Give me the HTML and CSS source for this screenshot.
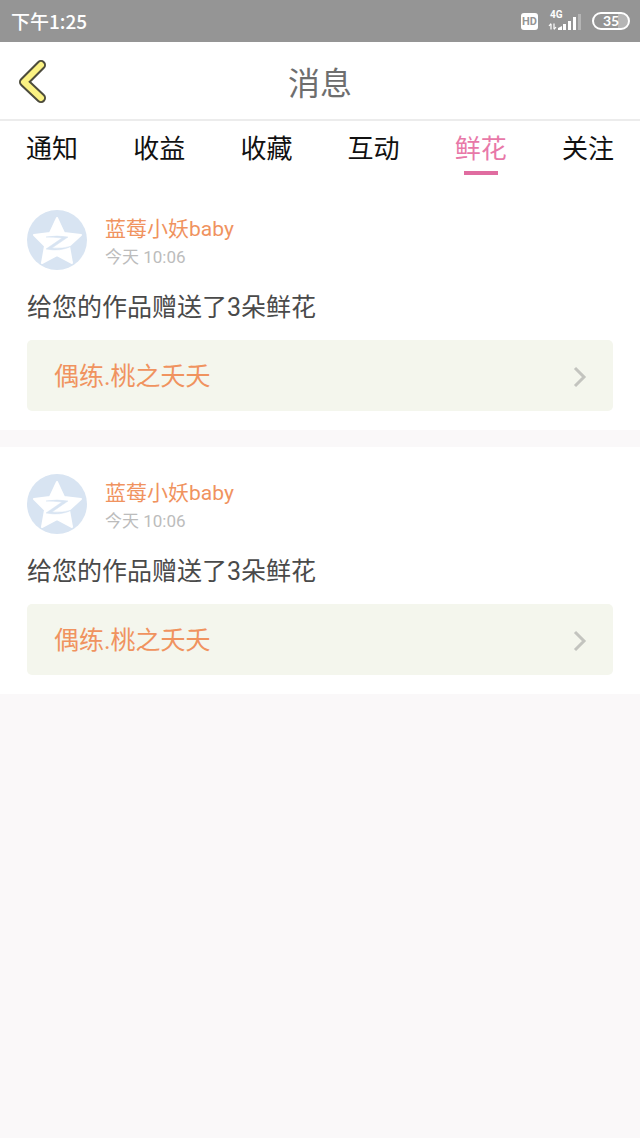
FILE: index.html
```html
<!DOCTYPE html>
<html lang="zh-CN">
<head>
<meta charset="utf-8">
<meta name="viewport" content="width=device-width, initial-scale=1">
<title>消息</title>
<link rel="stylesheet" href="styles.css">
</head>
<body>
<div class="status">
  <span class="status-time">下午1:25</span>
  <div class="status-icons">
    <span class="hd">HD</span>
    <div class="signal">
      <span class="signal-label">4G</span>
      <svg width="34" height="17" viewBox="0 0 34 17" aria-hidden="true">
        <g fill="none" stroke="#fff" stroke-width="1.2"><path d="M3 15.500V10M1 12l2-2.500M6 9.500V15M8 13l-2 2.500"/></g>
        <g fill="#fff"><path d="M10 16v-2l4-2v4zM15 10h3v6h-3zM20 7h3v9h-3zM25 3h3v13h-3z"/><path d="M30 0h3v16h-3z" opacity=".3"/></g>
      </svg>
    </div>
    <span class="battery">35</span>
  </div>
</div>
<header class="header">
  <button class="back" type="button" aria-label="返回">
    <svg width="30" height="46" viewBox="0 0 30 46" aria-hidden="true">
      <g fill="none" stroke-linecap="round" stroke-linejoin="round"><path d="M23 7L6 24L23 40" stroke="#4d4c3c" stroke-width="10"/><path d="M23 7L6 24L23 40" stroke="#fbf283" stroke-width="6"/></g>
    </svg>
  </button>
  <h1 class="title">消息</h1>
</header>
<nav class="tabs">
  <a class="tab" href="#notice">通知</a>
  <a class="tab" href="#income">收益</a>
  <a class="tab" href="#favorites">收藏</a>
  <a class="tab" href="#interact">互动</a>
  <a class="tab tab-active" href="#flowers" aria-current="page">鲜花</a>
  <a class="tab" href="#follow">关注</a>
</nav>
<main class="feed">
  <article class="card">
    <div class="user">
      <svg class="avatar" viewBox="0 0 60 60" aria-hidden="true">
        <circle cx="30" cy="30" r="30" fill="#d8e4f2"/>
        <path d="M30 8L37 23L54 25L42 36L45 53L30 45L15 53L18 36L7 25L23 23Z" fill="#fff" stroke="#fff" stroke-width="2" stroke-linejoin="round"/>
        <path d="M19 27Q30 25 41 27L25 38Q36 39 45 36Q33 42 19 39L35 28Q26 27 19 27Z" fill="#d8e4f2" stroke="#d8e4f2" stroke-width=".5"/>
      </svg>
      <div class="meta">
        <a class="name" href="#user">蓝莓小妖baby</a>
        <time class="time">今天 10:06</time>
      </div>
    </div>
    <p class="message">给您的作品赠送了3朵鲜花</p>
    <a class="work" href="#work">
      <span>偶练.桃之夭夭</span>
      <svg width="14" height="22" viewBox="0 0 14 22" aria-hidden="true"><path d="M2 2L11 11L2 20" fill="none" stroke="#c3c4bf" stroke-width="3"/></svg>
    </a>
  </article>
  <article class="card">
    <div class="user">
      <svg class="avatar" viewBox="0 0 60 60" aria-hidden="true">
        <circle cx="30" cy="30" r="30" fill="#d8e4f2"/>
        <path d="M30 8L37 23L54 25L42 36L45 53L30 45L15 53L18 36L7 25L23 23Z" fill="#fff" stroke="#fff" stroke-width="2" stroke-linejoin="round"/>
        <path d="M19 27Q30 25 41 27L25 38Q36 39 45 36Q33 42 19 39L35 28Q26 27 19 27Z" fill="#d8e4f2" stroke="#d8e4f2" stroke-width=".5"/>
      </svg>
      <div class="meta">
        <a class="name" href="#user">蓝莓小妖baby</a>
        <time class="time">今天 10:06</time>
      </div>
    </div>
    <p class="message">给您的作品赠送了3朵鲜花</p>
    <a class="work" href="#work">
      <span>偶练.桃之夭夭</span>
      <svg width="14" height="22" viewBox="0 0 14 22" aria-hidden="true"><path d="M2 2L11 11L2 20" fill="none" stroke="#c3c4bf" stroke-width="3"/></svg>
    </a>
  </article>
</main>
</body>
</html>
```
FILE: styles.css
```css
* { box-sizing: border-box; }
body {
  margin: 0;
  background: #faf8f9;
  color: #4a4a4a;
  font-family: Roboto, "Noto Sans CJK SC", sans-serif;
}
a { color: inherit; text-decoration: none; }
svg { display: block; flex: none; }

.status {
  display: flex;
  align-items: center;
  justify-content: space-between;
  height: 42px;
  padding: 0 10px 0 11px;
  background: #959595;
  color: #fff;
}
.status-time { font: 500 19px/24px "Noto Sans CJK SC", sans-serif; }
.status-icons { display: flex; align-items: center; gap: 10px; }
.hd {
  width: 17px;
  border-radius: 3px;
  background: #fff;
  color: #959595;
  font-size: 11px;
  font-weight: 700;
  line-height: 17px;
  text-align: center;
}
.signal { position: relative; padding-top: 2px; }
.signal-label {
  position: absolute;
  top: -3px;
  left: 2px;
  font-size: 10px;
  font-weight: 700;
  line-height: 12px;
}
.battery {
  width: 38px;
  border: 2px solid #fff;
  border-radius: 9px;
  background: linear-gradient(to right, transparent 70%, #b5b5b5 70%);
  font: 700 14px/14px Lato, sans-serif;
  text-align: center;
}

.header {
  display: grid;
  grid-template-columns: 64px 1fr 64px;
  align-items: center;
  height: 79px;
  border-bottom: 2px solid #ececec;
  background: #fff;
}
.back { padding: 0 0 0 18px; border: 0; background: none; }
.title {
  margin: 0;
  padding-top: 6px;
  color: #6e6e6e;
  font-size: 32px;
  font-weight: 400;
  line-height: 40px;
  text-align: center;
}

.tabs {
  display: flex;
  justify-content: space-between;
  height: 62px;
  padding: 9px 26px 0;
  background: #fff;
  color: #111;
  font-size: 26px;
  line-height: 38px;
}
.tab { display: flex; flex-direction: column; align-items: center; }
.tab-active { color: #e878a8; }
.tab-active::after {
  width: 34px;
  height: 4px;
  margin-top: 3px;
  background: #e06ca0;
  content: "";
}

.feed { display: grid; gap: 17px; }
.card { padding: 27px 27px 19px; background: #fff; }
.user { display: flex; align-items: center; gap: 18px; }
.avatar { width: 60px; height: 60px; }
.meta { display: flex; flex-direction: column; padding-top: 3px; }
.name { color: #f0935f; font-size: 21px; line-height: 30px; }
.time { color: #bcbcbc; font-size: 17px; line-height: 26px; }
.message { margin: 20px 0 14px; font-size: 25px; line-height: 36px; }
.work {
  display: flex;
  align-items: center;
  justify-content: space-between;
  padding: 19px 26px 16px 27px;
  border-radius: 5px;
  background: #f4f6ed;
  color: #f0935f;
  font-size: 25px;
  line-height: 36px;
}
```
